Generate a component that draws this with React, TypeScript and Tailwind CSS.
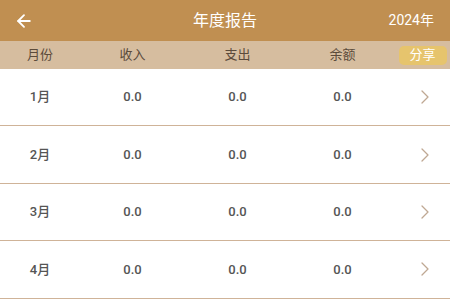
import { ArrowLeft } from "lucide-react";

const months = ["1月", "2月", "3月", "4月"];

const GRID = "grid grid-cols-[80px_105px_105px_105px_1fr] items-center";

function Chevron() {
  return (
    <svg width="8" height="14" viewBox="0 0 8 14" fill="none" aria-hidden="true">
      <path d="M1 1l6 6-6 6" stroke="#bfa893" strokeWidth="1.3" strokeLinecap="round" strokeLinejoin="round" />
    </svg>
  );
}

export default function App() {
  return (
    <div className="w-[450px] h-[299px] overflow-hidden bg-white font-['Roboto','Noto_Sans_CJK_SC',sans-serif]">
      <div className="relative flex h-[41px] items-center bg-[#c08f51] px-4 text-white">
        <ArrowLeft className="h-5 w-5 -ml-0.5" strokeWidth={2.2} />
        <div className="absolute left-1/2 -translate-x-1/2 text-[16px]">年度报告</div>
        <div className="ml-auto text-[14px]">2024年</div>
      </div>

      <div className={`${GRID} h-[28px] bg-[#d6bd9f] text-[13px] text-[#5b4b3b]`}>
        <div className="text-center">月份</div>
        <div className="text-center">收入</div>
        <div className="text-center">支出</div>
        <div className="text-center">余额</div>
        <div className="flex justify-center">
          <span className="flex h-[19px] w-[48px] items-center justify-center rounded-[5px] bg-[#e6c46d] text-white">
            分享
          </span>
        </div>
      </div>

      {months.map((m) => (
        <div key={m} className={`${GRID} h-[57.4px] border-b border-[#cfb398] text-[13px] font-medium text-[#555]`}>
          <div className="text-center">{m}</div>
          <div className="text-center">0.0</div>
          <div className="text-center">0.0</div>
          <div className="text-center">0.0</div>
          <div className="flex justify-center pl-1">
            <Chevron />
          </div>
        </div>
      ))}
    </div>
  );
}
